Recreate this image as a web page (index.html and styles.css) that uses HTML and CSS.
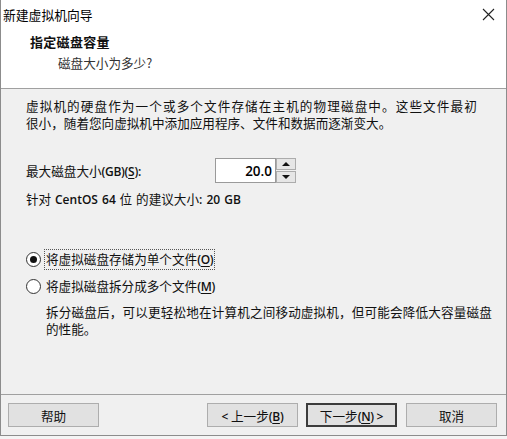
FILE: index.html
```html
<!DOCTYPE html>
<html lang="zh-CN">
  <head>
    <meta charset="UTF-8" />
    <meta name="viewport" content="width=device-width, initial-scale=1.0" />
    <title>新建虚拟机向导</title>
    <link rel="stylesheet" href="styles.css">
  </head>
  <body>
    <div class="window">
      <header class="top">
        <div class="titlebar">
          <span class="title">新建虚拟机向导</span>
          <svg class="close" width="13" height="13" viewBox="0 0 13 13">
            <path d="M1 1 L12 12 M12 1 L1 12" stroke="#222" stroke-width="1.1" fill="none" />
          </svg>
        </div>
        <div class="heading">
          <h1>指定磁盘容量</h1>
          <p class="sub">磁盘大小为多少?</p>
        </div>
      </header>

      <main class="content">
        <p class="intro"><span class="wide">虚拟机的硬盘作为一个或多个文件存储在主机的物理磁盘中。这些文件最初</span><br />很小，随着您向虚拟机中添加应用程序、文件和数据而逐渐变大。</p>

        <div class="size-row">
          <label class="size-label">最大磁盘大小<span class="lat">(GB)(<u>S</u>):</span></label>
          <div class="spin">
            <input type="text" class="spin-input" value="20.0" />
            <div class="spin-btns">
              <span class="spin-btn"><i class="arrow up"></i></span>
              <span class="spin-btn"><i class="arrow down"></i></span>
            </div>
          </div>
        </div>

        <p class="hint">针对 <span class="lat">CentOS 64</span> 位 的建议大小<span class="lat">: 20 GB</span></p>

        <div class="options">
          <label class="option">
            <span class="radio checked"></span>
            <span class="option-text focus">将虚拟磁盘存储为单个文件<span class="lat">(<u>O</u>)</span></span>
          </label>
          <label class="option">
            <span class="radio"></span>
            <span class="option-text">将虚拟磁盘拆分成多个文件<span class="lat">(<u>M</u>)</span></span>
          </label>
          <p class="option-note"><span class="note-line">拆分磁盘后，可以更轻松地在计算机之间移动虚拟机，但可能会降低大容量磁盘</span><br />的性能。</p>
        </div>
      </main>

      <footer class="buttons">
        <button class="btn">帮助</button>
        <span class="spacer"></span>
        <button class="btn"><span class="lat">&lt;</span> 上一步<span class="lat">(<u>B</u>)</span></button>
        <button class="btn default">下一步<span class="lat">(<u>N</u>) &gt;</span></button>
        <button class="btn cancel">取消</button>
      </footer>
    </div>
  </body>
</html>
```

FILE: styles.css
```css
html,
body {
  margin: 0;
  padding: 0;
  background: #f4f4f4;
}
body {
  font-family: "Noto Sans CJK SC", "Noto Sans", sans-serif;
  font-size: 12.6px;
  color: #111;
}
.window {
  width: 507px;
  height: 436px;
  box-sizing: border-box;
  border: 1px solid #8c8c8c;
  border-top: none;
  display: flex;
  flex-direction: column;
  background: #f0f0f0;
}
.lat {
  font-family: "Open Sans", "Noto Sans", "Noto Sans CJK SC", sans-serif;
  font-size: 12px;
  font-weight: 600;
  letter-spacing: -0.3px;
}
u {
  text-underline-offset: 2px;
}

/* title + header */
.top {
  background: #fff;
  height: 88px;
  border-bottom: 1px solid #a0a0a0;
  flex-shrink: 0;
}
.titlebar {
  height: 28px;
  display: flex;
  align-items: center;
  justify-content: space-between;
  padding: 0 11px 0 2px;
}
.title {
  font-size: 12.8px;
  color: #000;
}
.close {
  margin-top: 1px;
}
.heading {
  padding-left: 29px;
  padding-top: 4px;
}
.heading h1 {
  margin: 0;
  font-size: 13px;
  font-weight: bold;
  letter-spacing: 0.3px;
  line-height: 20px;
}
.sub {
  margin: 1px 0 0;
  padding-left: 28px;
  line-height: 20px;
  color: #333;
}

/* body */
.content {
  flex: 1;
  padding: 0 0 0 25px;
}
.intro {
  margin: 8px 0 0;
  line-height: 17px;
}
.wide {
  letter-spacing: 1.1px;
  white-space: nowrap;
}
.size-row {
  display: flex;
  align-items: center;
  margin-top: 27px;
}
.size-label {
  width: 189px;
}
.spin {
  display: flex;
  height: 25px;
}
.spin-input {
  width: 61px;
  height: 25px;
  box-sizing: border-box;
  border: 1px solid #9a9a9a;
  background: #fff;
  text-align: right;
  padding: 0 3px 0 0;
  font-family: "Open Sans", "Noto Sans", sans-serif;
  font-weight: 600;
  font-size: 13.5px;
  color: #000;
  outline: none;
}
.spin-btns {
  width: 20px;
  display: flex;
  flex-direction: column;
  gap: 1px;
}
.spin-btn {
  flex: 1;
  background: #e6e6e6;
  border: 1px solid #acacac;
  display: flex;
  align-items: center;
  justify-content: center;
}
.arrow {
  width: 0;
  height: 0;
  border-left: 4px solid transparent;
  border-right: 4px solid transparent;
}
.arrow.up {
  border-bottom: 4px solid #111;
}
.arrow.down {
  border-top: 4px solid #111;
}
.hint {
  margin: 8px 0 0;
  line-height: 16px;
  word-spacing: 1px;
}
.hint .lat {
  letter-spacing: 0;
}

/* radio options */
.options {
  margin-top: 41px;
  display: flex;
  flex-direction: column;
}
.option {
  display: flex;
  align-items: center;
  height: 20px;
  margin-bottom: 7px;
}
.radio {
  width: 13px;
  height: 13px;
  border: 1px solid #333;
  border-radius: 50%;
  background: #fff;
  display: flex;
  align-items: center;
  justify-content: center;
  margin-right: 3px;
}
.radio.checked::after {
  content: "";
  width: 7px;
  height: 7px;
  border-radius: 50%;
  background: #111;
}
.option-text {
  padding: 1px 1px;
  line-height: 16px;
  border: 1px solid transparent;
}
.option-text.focus {
  border: 1px dotted #555;
}
.option-note {
  margin: 0 0 0 20px;
  line-height: 17px;
}
.note-line {
  letter-spacing: 0.15px;
  white-space: nowrap;
}

/* footer buttons */
.buttons {
  flex-shrink: 0;
  height: 40px;
  border-top: 1px solid #a0a0a0;
  display: flex;
  align-items: center;
  gap: 8px;
  padding: 0 9px 0 7px;
}
.spacer {
  flex: 1;
}
.btn {
  width: 91px;
  height: 24px;
  box-sizing: border-box;
  border: 1px solid #adadad;
  background: #e1e1e1;
  font-family: "Noto Sans CJK SC", "Noto Sans", sans-serif;
  font-size: 12.6px;
  color: #111;
  padding: 0;
}
.btn.default {
  border: 2px solid #3c3c3c;
}
.btn.cancel {
  margin-left: 1px;
}
```
